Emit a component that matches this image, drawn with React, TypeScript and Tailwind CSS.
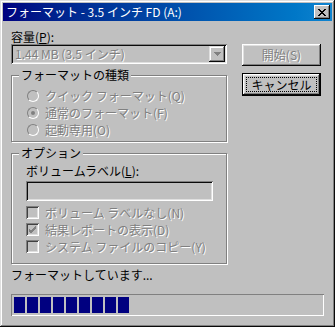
import React from "react";

const FONT = "font-['MS_UI_Gothic','Noto_Sans_CJK_JP',sans-serif]";

const Disabled: React.FC<{ children: React.ReactNode }> = ({ children }) => (
  <span className="text-[#808080] [text-shadow:1px_1px_0_#ffffff]">{children}</span>
);

const Radio: React.FC<{ checked?: boolean; label: React.ReactNode }> = ({ checked, label }) => (
  <div className="flex items-center gap-[6px] h-[17px]">
    <span className="relative w-[12px] h-[12px] rounded-full bg-[#c0c0c0] border border-t-[#808080] border-l-[#808080] border-b-white border-r-white flex items-center justify-center">
      {checked && <span className="w-[4px] h-[4px] rounded-full bg-[#808080]" />}
    </span>
    <Disabled>{label}</Disabled>
  </div>
);

const Check: React.FC<{ checked?: boolean; label: React.ReactNode }> = ({ checked, label }) => (
  <div className="flex items-center gap-[6px] h-[17px]">
    <span className="w-[13px] h-[13px] bg-[#c0c0c0] shadow-[inset_1px_1px_#808080,inset_-1px_-1px_#ffffff,inset_2px_2px_#404040,inset_-2px_-2px_#dfdfdf] flex items-center justify-center">
      {checked && (
        <svg width="9" height="9" viewBox="0 0 9 9">
          <path d="M1 4 L3 6 L8 1 M1 5 L3 7 L8 2 M1 6 L3 8 L8 3" stroke="#808080" strokeWidth="1" fill="none" />
        </svg>
      )}
    </span>
    <Disabled>{label}</Disabled>
  </div>
);

const Group: React.FC<{ title: string; className?: string; children: React.ReactNode }> = ({ title, className, children }) => (
  <div className={`relative border border-[#808080] shadow-[1px_1px_#ffffff,inset_1px_1px_#ffffff] ${className ?? ""}`}>
    <span className="absolute -top-[8px] left-[7px] bg-[#c0c0c0] px-[2px] leading-[14px]">{title}</span>
    {children}
  </div>
);

export default function App() {
  return (
    <div className={`w-[335px] h-[327px] bg-[#c0c0c0] text-[12px] leading-[14px] text-black ${FONT} shadow-[inset_-1px_-1px_#0a0a0a,inset_1px_1px_#dfdfdf,inset_-2px_-2px_#808080,inset_2px_2px_#ffffff] p-[3px] flex flex-col`}>
      {/* title bar */}
      <div className="h-[18px] bg-gradient-to-r from-[#000080] to-[#1084d0] flex items-center justify-between pl-[3px] pr-[2px]">
        <span className="text-white">フォーマット - 3.5 インチ FD (A:)</span>
        <span className="w-[16px] h-[14px] bg-[#c0c0c0] shadow-[inset_-1px_-1px_#0a0a0a,inset_1px_1px_#ffffff,inset_-2px_-2px_#808080] flex items-center justify-center">
          <svg width="8" height="7" viewBox="0 0 8 7">
            <path d="M0 0h2v1h1v1h2v-1h1v-1h2v1h-1v1h-1v1h-1v1h1v1h1v1h1v1h-2v-1h-1v-1h-2v1h-1v1h-2v-1h1v-1h1v-1h1v-1h-1v-1h-1v-1h-1z" fill="#000" />
          </svg>
        </span>
      </div>

      <div className="flex px-[8px] pt-[9px]">
        <div className="w-[216px] flex flex-col">
          <div>容量(<span className="underline">P</span>):</div>
          <div className="h-[20px] bg-[#c0c0c0] shadow-[inset_1px_1px_#808080,inset_-1px_-1px_#ffffff,inset_2px_2px_#0a0a0a,inset_-2px_-2px_#dfdfdf] flex items-center pl-[4px] pr-[2px]">
            <span className="flex-1"><Disabled>1.44 MB (3.5 インチ)</Disabled></span>
            <span className="w-[16px] h-[16px] bg-[#c0c0c0] shadow-[inset_-1px_-1px_#0a0a0a,inset_1px_1px_#dfdfdf,inset_-2px_-2px_#808080,inset_2px_2px_#ffffff] flex items-center justify-center">
              <svg width="7" height="4" viewBox="0 0 7 4">
                <path d="M0 0h7v1h-1v1h-1v1h-1v1h-1v-1h-1v-1h-1v-1h-1z" fill="#808080" />
              </svg>
            </span>
          </div>

          <Group title="フォーマットの種類" className="mt-[11px] h-[67px] pt-[11px] pl-[15px]">
            <Radio label="クイック フォーマット(Q)" />
            <Radio checked label="通常のフォーマット(F)" />
            <Radio label="起動専用(O)" />
          </Group>

          <Group title="オプション" className="mt-[11px] h-[111px] pt-[10px] pl-[14px] pr-[13px]">
            <div>ボリュームラベル(<span className="underline">L</span>):</div>
            <div className="mt-[3px] h-[20px] bg-[#c0c0c0] shadow-[inset_1px_1px_#808080,inset_-1px_-1px_#ffffff,inset_2px_2px_#0a0a0a,inset_-2px_-2px_#dfdfdf]" />
            <div className="mt-[3px] flex flex-col">
              <Check label="ボリューム ラベルなし(N)" />
              <Check checked label="結果レポートの表示(D)" />
              <Check label="システム ファイルのコピー(Y)" />
            </div>
          </Group>
        </div>

        <div className="ml-[15px] flex flex-col gap-[7px] pt-[14px]">
          <div className="w-[79px] h-[22px] shadow-[inset_-1px_-1px_#0a0a0a,inset_1px_1px_#ffffff,inset_-2px_-2px_#808080,inset_2px_2px_#dfdfdf] flex items-center justify-center">
            <Disabled>開始(S)</Disabled>
          </div>
          <div className="w-[79px] h-[23px] border border-black shadow-[inset_-1px_-1px_#0a0a0a,inset_1px_1px_#ffffff,inset_-2px_-2px_#808080,inset_2px_2px_#dfdfdf] flex items-center justify-center p-[3px]">
            <span className="w-full h-full border border-dotted border-black flex items-center justify-center">キャンセル</span>
          </div>
        </div>
      </div>

      <div className="px-[8px] mt-[4px]">フォーマットしています...</div>
      <div className="mx-[8px] mt-[12px] h-[22px] shadow-[inset_1px_1px_#808080,inset_-1px_-1px_#ffffff] flex items-center gap-[2px] px-[3px]">
        {Array.from({ length: 9 }).map((_, i) => (
          <span key={i} className="w-[11px] h-[16px] bg-[#000080]" />
        ))}
      </div>
    </div>
  );
}
